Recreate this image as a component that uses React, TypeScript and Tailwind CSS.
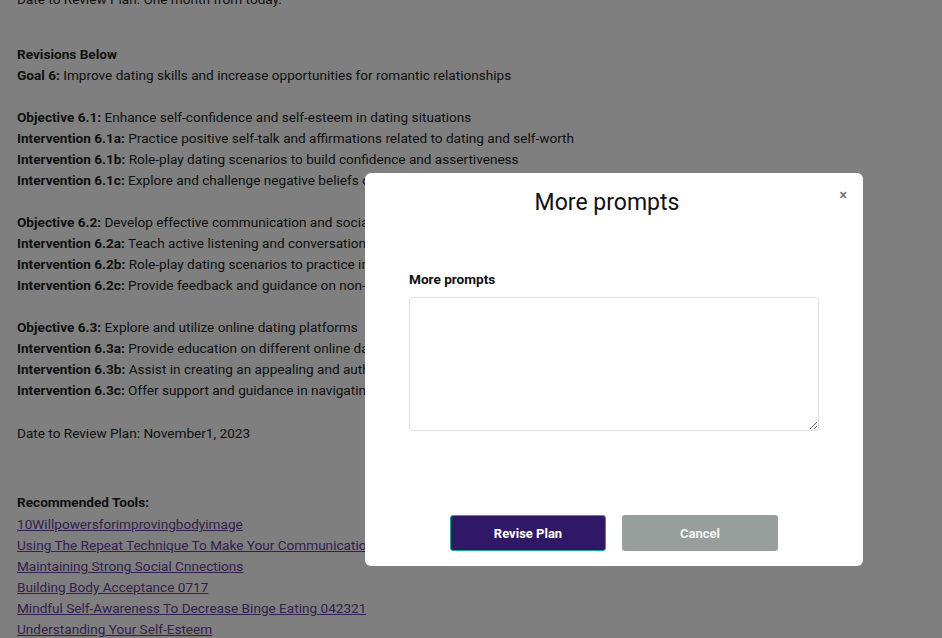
const sections: Array<Array<[string, string]>> = [
  [
    ['Objective 6.1:', 'Enhance self-confidence and self-esteem in dating situations'],
    ['Intervention 6.1a:', 'Practice positive self-talk and affirmations related to dating and self-worth'],
    ['Intervention 6.1b:', 'Role-play dating scenarios to build confidence and assertiveness'],
    ['Intervention 6.1c:', 'Explore and challenge negative beliefs or past experiences that may affect dating confidence'],
  ],
  [
    ['Objective 6.2:', 'Develop effective communication and social skills for dating'],
    ['Intervention 6.2a:', 'Teach active listening and conversation skills for building connections'],
    ['Intervention 6.2b:', 'Role-play dating scenarios to practice initiating and maintaining conversations'],
    ['Intervention 6.2c:', 'Provide feedback and guidance on non-verbal communication and body language'],
  ],
  [
    ['Objective 6.3:', 'Explore and utilize online dating platforms'],
    ['Intervention 6.3a:', 'Provide education on different online dating platforms and safety practices'],
    ['Intervention 6.3b:', 'Assist in creating an appealing and authentic online dating profile'],
    ['Intervention 6.3c:', 'Offer support and guidance in navigating online dating interactions and first dates'],
  ],
];

const tools = [
  '10Willpowersforimprovingbodyimage',
  'Using The Repeat Technique To Make Your Communication More Effective',
  'Maintaining Strong Social Cnnections',
  'Building Body Acceptance 0717',
  'Mindful Self-Awareness To Decrease Binge Eating 042321',
  'Understanding Your Self-Esteem',
];

function Line({ label, text }: { label: string; text: string }) {
  return (
    <div className="whitespace-nowrap">
      <span className="font-bold">{label}</span> {text}
    </div>
  );
}

export default function App() {
  return (
    <div
      className="relative h-[638px] w-[942px] overflow-hidden bg-white text-[13.6px] leading-[21px] text-[#1c1f22]"
      style={{ fontFamily: 'Roboto, "Liberation Sans", sans-serif' }}
    >
      <div className="-mt-[11px] px-[17px]">
        <div>Date to Review Plan: One month from today.</div>
        <div className="h-[34px]" />
        <div className="font-bold">Revisions Below</div>
        <Line label="Goal 6:" text="Improve dating skills and increase opportunities for romantic relationships" />
        {sections.map((s, i) => (
          <div key={i}>
            <div className="h-[21px]" />
            {s.map(([l, t]) => (
              <Line key={l} label={l} text={t} />
            ))}
          </div>
        ))}
        <div className="h-[21px]" />
        <div className="mt-[1px]">Date to Review Plan: November1, 2023</div>
        <div className="h-[21px]" />
        <div className="h-[21px]" />
        <div className="mt-[6px] font-bold">Recommended Tools:</div>
        <div className="mt-[1px]">
          {tools.map((t) => (
            <div key={t}>
              <a href="#" className="text-[#6a3f9c] underline">
                {t}
              </a>
            </div>
          ))}
        </div>
      </div>

      {/* backdrop */}
      <div className="absolute inset-0 bg-black/50" />

      {/* modal */}
      <div className="absolute left-[365px] top-[173px] flex w-[498px] flex-col rounded-[6px] bg-white">
        <div className="relative h-[58px] pr-[14px] pt-[16px] text-center text-[23px] leading-[28px] text-[#111]">
          More prompts
          <button className="absolute right-[16px] top-[14px] text-[14px] font-bold leading-[16px] text-[#777]">
            ×
          </button>
        </div>
        <div className="px-[44px] pt-[38px]">
          <div className="text-[13.6px] font-bold leading-[20px] text-[#111]">More prompts</div>
          <textarea className="mt-[8px] block h-[134px] w-full rounded-[3px] border border-[#dee2e6] outline-none" />
        </div>
        <div className="flex justify-center gap-[16px] pb-[15px] pt-[84px]">
          <button className="h-[36px] w-[156px] rounded-[3px] border border-[#1fa58f] bg-[#2f1967] text-[13px] font-bold text-white">
            Revise Plan
          </button>
          <button className="h-[36px] w-[156px] rounded-[3px] bg-[#979e9b] text-[13px] font-bold text-[#f4f4f4]">
            Cancel
          </button>
        </div>
      </div>
    </div>
  );
}
